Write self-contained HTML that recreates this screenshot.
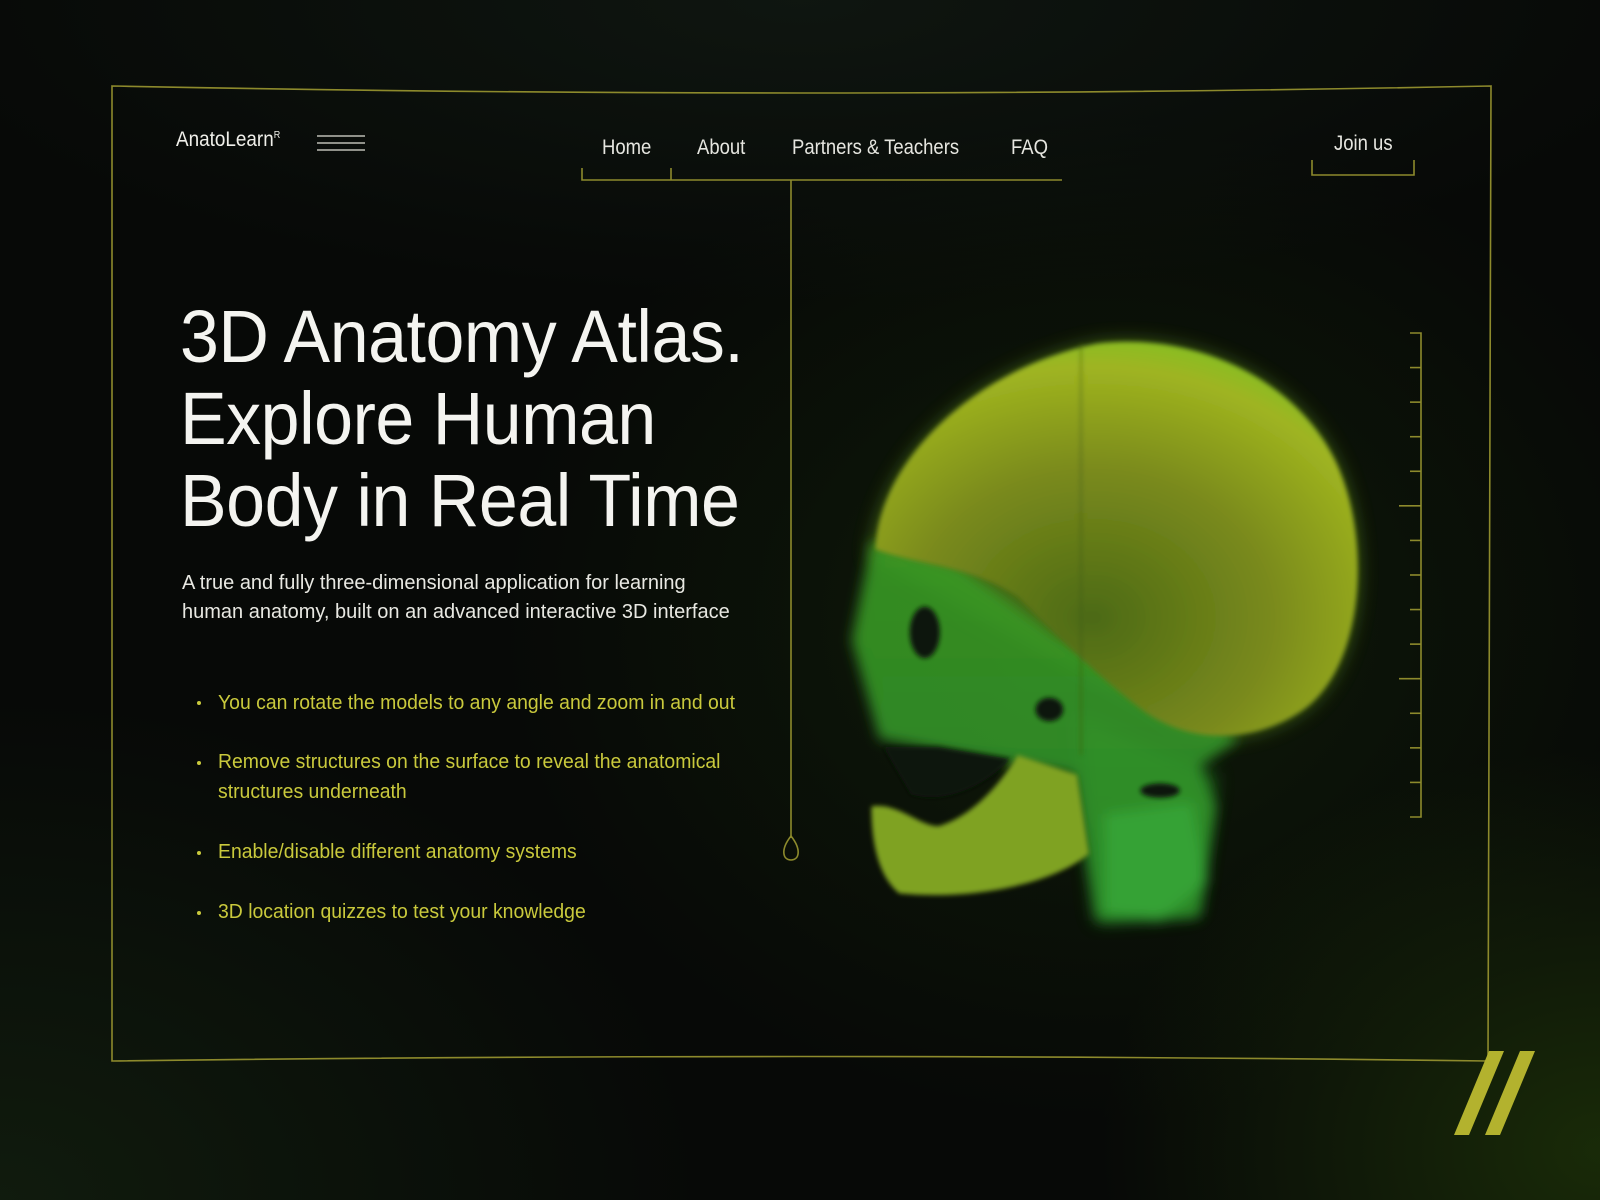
<!DOCTYPE html>
<html><head><meta charset="utf-8"><style>
*{margin:0;padding:0;box-sizing:border-box}
body{width:1600px;height:1200px;overflow:hidden;position:relative;background:#070907;font-family:"Liberation Sans",sans-serif;}
.bg{position:absolute;inset:0;background:
radial-gradient(ellipse 500px 400px at 1600px 1150px,rgba(40,70,10,.55),transparent),
radial-gradient(ellipse 700px 500px at 0px 1200px,rgba(25,45,20,.5),transparent),
radial-gradient(ellipse 900px 300px at 800px 0px,rgba(20,30,22,.6),transparent),
radial-gradient(ellipse 600px 500px at 1100px 620px,rgba(30,60,10,.35),transparent);}
.t{position:absolute;white-space:nowrap;transform-origin:0 0}
.nav{color:#e6e6e0;font-size:21px;top:136px;transform:scaleX(.88)}
h1{position:absolute;left:180px;top:296px;color:#f4f4f0;font-weight:normal;font-size:74px;line-height:82px;letter-spacing:-0.5px;white-space:nowrap;transform:scaleX(.945);transform-origin:0 0}
.p{left:182px;top:569px;color:#e8e8e2;font-size:20px;line-height:29px;transform:scaleX(1)}
.li{color:#c9c93c;font-size:20px;line-height:30px;left:218px;transform:scaleX(.97)}
.dot{position:absolute;width:4px;height:4px;border-radius:2px;background:#c9c93c;left:197px}
</style></head><body>
<div class="bg"></div>
<svg width="1600" height="1200" style="position:absolute;left:0;top:0">
<g fill="none" stroke="#8d8a2c" stroke-width="1.6">
<path d="M112 86 Q800 100 1491 86 L1488 1061 Q800 1052 112 1061 Z"/>
<path d="M582 168 V180 H1062"/><path d="M671 168 V180"/>
<path d="M791 180 V838"/>
<path d="M791 836 C780 850 783 860 791 860 C799 860 802 850 791 836 Z"/>
<path d="M1312 160 V175 H1414 V160"/>
<path d="M1410 333 H1421 V817 H1410"/>
</g>
<g stroke="#8d8a2c" stroke-width="1.6" id="ticks"></g>
<g fill="none" stroke="#bdbdb5" stroke-width="1.5"><path d="M317 136 H365 M317 143 H365 M317 150 H365"/></g>
<polygon points="1489,1051 1504,1051 1469,1135 1454,1135" fill="#b3b22e"/>
<polygon points="1520,1051 1535,1051 1500,1135 1485,1135" fill="#b3b22e"/>
</svg>
<script>
var g=document.getElementById('ticks'),s='';
for(var i=1;i<14;i++){var y=333+i*34.57;var l=(i==5||i==10)?22:11;s+='<line x1="'+(1421-l)+'" y1="'+y+'" x2="1421" y2="'+y+'"/>';}
g.innerHTML=s;
</script>
<svg style="position:absolute;left:820px;top:320px" width="620" height="620" viewBox="0 0 1568 1568">
<defs>
<radialGradient id="cr" cx="0.45" cy="0.7" r="0.75">
<stop offset="0" stop-color="#4c6a14"/><stop offset="0.5" stop-color="#7a8a1c"/><stop offset="0.85" stop-color="#9fb420"/><stop offset="1" stop-color="#7cc224"/>
</radialGradient>
<linearGradient id="fc" x1="0" y1="0" x2="0" y2="1"><stop offset="0" stop-color="#3a9a24"/><stop offset="1" stop-color="#2c8e2a"/></linearGradient>
<filter id="bl"><feGaussianBlur stdDeviation="25"/></filter>
<filter id="sb"><feGaussianBlur stdDeviation="6"/></filter>
<filter id="fb"><feGaussianBlur stdDeviation="16"/></filter>
</defs>
<g filter="url(#bl)" opacity="0.55">
<path d="M130 600 C150 350 400 120 700 60 C950 30 1200 150 1300 350 C1400 550 1380 900 1200 1000 C1100 1060 950 1080 850 1000 Z" fill="#6fa820"/>
<path d="M650 1000 L1000 1150 L950 1500 L700 1520 Z" fill="#2aa02a"/>
</g>
<g filter="url(#fb)">
<path d="M130 560 L80 810 L150 1060 L420 1110 L640 1150 L700 1520 L960 1510 L1000 1230 L960 1130 L1060 1060 L900 950 L600 800 L350 620 Z" fill="url(#fc)" opacity=".9"/>
<path d="M720 1250 L940 1220 L980 1420 L860 1520 L720 1500 Z" fill="#38a83a" opacity=".8"/>
</g>
<g filter="url(#sb)">
<path d="M140 580 C150 350 400 120 700 60 C950 30 1200 150 1300 350 C1400 550 1380 900 1200 1000 C1100 1060 950 1080 820 990 C700 900 600 800 500 700 C380 620 250 620 140 580 Z" fill="url(#cr)"/>
<path d="M130 1230 C200 1220 250 1280 300 1280 C400 1250 470 1150 500 1100 L650 1150 L680 1350 C600 1420 400 1470 200 1450 C140 1400 130 1300 130 1230 Z" fill="#7fa224"/>
<path d="M230 1200 C330 1230 440 1160 480 1110 L300 1080 L160 1080 Z" fill="#0a120a"/>
<ellipse cx="265" cy="790" rx="38" ry="65" fill="#0b140b"/>
<ellipse cx="580" cy="985" rx="35" ry="30" fill="#0b140b"/>
<ellipse cx="860" cy="1190" rx="50" ry="18" fill="#0b140b"/>
<path d="M660 60 L660 1100" stroke="#3c5a14" stroke-width="5" opacity=".6"/>
</g>
</svg>
<div class="t" style="left:176px;top:128px;color:#f0f0ea;font-size:21px;transform:scaleX(.9)">AnatoLearn<sup style="font-size:10px">R</sup></div>
<div class="t nav" style="left:602px">Home</div>
<div class="t nav" style="left:697px">About</div>
<div class="t nav" style="left:792px">Partners &amp; Teachers</div>
<div class="t nav" style="left:1011px">FAQ</div>
<div class="t nav" style="left:1334px;top:132px">Join us</div>
<h1>3D Anatomy Atlas.<br>Explore Human<br>Body in Real Time</h1>
<div class="t p">A true and fully three-dimensional application for learning<br>human anatomy, built on an advanced interactive 3D interface</div>
<div class="dot" style="top:701px"></div><div class="t li" style="top:688px">You can rotate the models to any angle and zoom in and out</div>
<div class="dot" style="top:761px"></div><div class="t li" style="top:747px">Remove structures on the surface to reveal the anatomical<br>structures underneath</div>
<div class="dot" style="top:851px"></div><div class="t li" style="top:837px">Enable/disable different anatomy systems</div>
<div class="dot" style="top:911px"></div><div class="t li" style="top:897px">3D location quizzes to test your knowledge</div>
</body></html>
